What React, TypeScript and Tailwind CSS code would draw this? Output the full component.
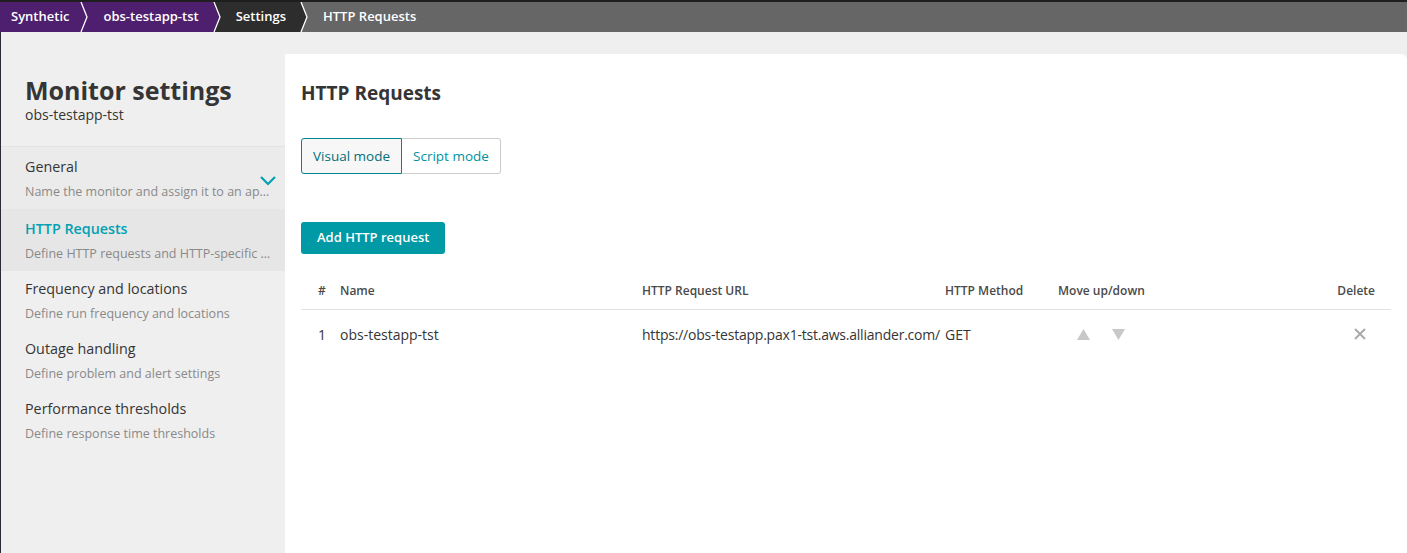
import React from "react";

const crumbs = [
  { label: "Synthetic", bg: "#4e1f6e" },
  { label: "obs-testapp-tst", bg: "#4e1f6e" },
  { label: "Settings", bg: "#2d2d2d" },
  { label: "HTTP Requests", bg: "#666666" },
];

const navItems = [
  { title: "General", desc: "Name the monitor and assign it to an application" },
  { title: "HTTP Requests", desc: "Define HTTP requests and HTTP-specific settings" },
  { title: "Frequency and locations", desc: "Define run frequency and locations" },
  { title: "Outage handling", desc: "Define problem and alert settings" },
  { title: "Performance thresholds", desc: "Define response time thresholds" },
];

function Breadcrumbs() {
  return (
    <div className="flex h-[30px] items-stretch bg-[#666666] text-[13px] font-semibold text-white">
      {crumbs.map((c, i) => {
        const next = crumbs[i + 1];
        return (
          <React.Fragment key={c.label}>
            <div
              className={`flex items-center ${i === 0 ? "pl-[11px] pr-[11px]" : "pl-[15px] pr-[14px]"}`}
              style={{ backgroundColor: c.bg }}
            >
              {c.label}
            </div>
            {next && (
              <svg
                width="8"
                height="30"
                viewBox="0 0 8 30"
                style={{ backgroundColor: next.bg }}
                className="block shrink-0"
              >
                <polygon points="0,0 1,0 7,15 1,30 0,30" fill={c.bg} />
                <polyline
                  points="1,0 7,15 1,30"
                  fill="none"
                  stroke="#ffffff"
                  strokeWidth="1.3"
                />
              </svg>
            )}
          </React.Fragment>
        );
      })}
    </div>
  );
}

function Sidebar() {
  return (
    <aside className="w-[285px] shrink-0 border-l border-[#2c2a3a] bg-[#efefef]">
      <div className="pl-[24px] pt-[43px] pb-[22px]">
        <h1 className="text-[25px] font-bold leading-[30px] text-[#353535]">
          Monitor settings
        </h1>
        <p className="mt-px text-[14px] leading-[18px] text-[#353535]">obs-testapp-tst</p>
      </div>
      <nav className="border-t border-[#e2e2e2]">
        {navItems.map((item, i) => {
          const active = i === 1;
          return (
            <div
              key={item.title}
              className={`relative pl-[24px] pr-[13px] ${
                i < 2 ? "pt-[10px] pb-[8px]" : "pt-[8px] pb-[8px]"
              } ${active ? "bg-[#e6e6e6]" : i === 0 ? "bg-[#ebebeb]" : ""}`}
            >
              <div
                className={`text-[14.3px] leading-5 ${
                  active ? "font-semibold text-[#00a1b2]" : "text-[#353535]"
                }`}
              >
                {item.title}
              </div>
              <div className="mt-[6px] truncate text-[12.5px] leading-[18px] text-[#898989]">
                {item.desc}
              </div>
              {i === 0 && (
                <svg
                  className="absolute right-[8px] top-[28px]"
                  width="18"
                  height="11"
                  viewBox="0 0 18 11"
                >
                  <polyline
                    points="2,2 9,9 16,2"
                    fill="none"
                    stroke="#00a1b2"
                    strokeWidth="2.2"
                  />
                </svg>
              )}
            </div>
          );
        })}
      </nav>
    </aside>
  );
}

function RequestsTable() {
  return (
    <div className="mr-[16px] mt-[18px]">
      <div className="grid h-[38px] grid-cols-[39px_302px_303px_113px_1fr_80px] items-center border-b border-[#e2e2e2] text-[12px] font-semibold text-[#4a4a4a]">
        <div className="pl-[17px]">#</div>
        <div>Name</div>
        <div>HTTP Request URL</div>
        <div>HTTP Method</div>
        <div>Move up/down</div>
        <div className="pr-[16px] text-right">Delete</div>
      </div>
      <div className="grid h-[48px] grid-cols-[39px_302px_303px_113px_1fr_80px] items-center text-[14px] text-[#353535]">
        <div className="pl-[17px]">1</div>
        <div>obs-testapp-tst</div>
        <div className="whitespace-nowrap tracking-[-0.22px]">
          https://obs-testapp.pax1-tst.aws.alliander.com/
        </div>
        <div>GET</div>
        <div className="flex items-center gap-[22px] pl-[19px]">
          <svg width="13" height="11" viewBox="0 0 13 11">
            <polygon points="6.5,0 13,11 0,11" fill="#c8c8c8" />
          </svg>
          <svg width="13" height="11" viewBox="0 0 13 11">
            <polygon points="0,0 13,0 6.5,11" fill="#c8c8c8" />
          </svg>
        </div>
        <div className="flex justify-end pr-[24px]">
          <svg width="14" height="14" viewBox="0 0 14 14">
            <path d="M2 2 L12 12 M12 2 L2 12" stroke="#aaaaaa" strokeWidth="2" />
          </svg>
        </div>
      </div>
    </div>
  );
}

function MainPanel() {
  return (
    <main className="flex flex-1 flex-col bg-[#efefef] pt-[22px]">
      <div className="flex-1 rounded-tr-[6px] bg-white pl-[16px] pt-[27px]">
        <h2 className="text-[19px] font-bold leading-6 text-[#353535]">HTTP Requests</h2>
        <div className="mt-[33px] flex text-[13.5px]">
          <button className="h-[36px] rounded-l-[3px] border border-[#00848e] bg-[#f7f7f7] px-[11px] text-[#00707b]">
            Visual mode
          </button>
          <button className="h-[36px] rounded-r-[3px] border border-l-0 border-[#cccccc] bg-white px-[11px] text-[#00929e]">
            Script mode
          </button>
        </div>
        <button className="mt-[48px] h-[32px] rounded-[3px] bg-[#0099a6] px-[16px] text-[13px] font-semibold text-white">
          Add HTTP request
        </button>
        <RequestsTable />
      </div>
    </main>
  );
}

export default function App() {
  return (
    <div
      className="flex h-[553px] w-full flex-col overflow-hidden border-t-2 border-[#1e1e1e]"
      style={{ fontFamily: "'Open Sans', 'Noto Sans', sans-serif" }}
    >
      <Breadcrumbs />
      <div className="flex flex-1">
        <Sidebar />
        <MainPanel />
      </div>
    </div>
  );
}
